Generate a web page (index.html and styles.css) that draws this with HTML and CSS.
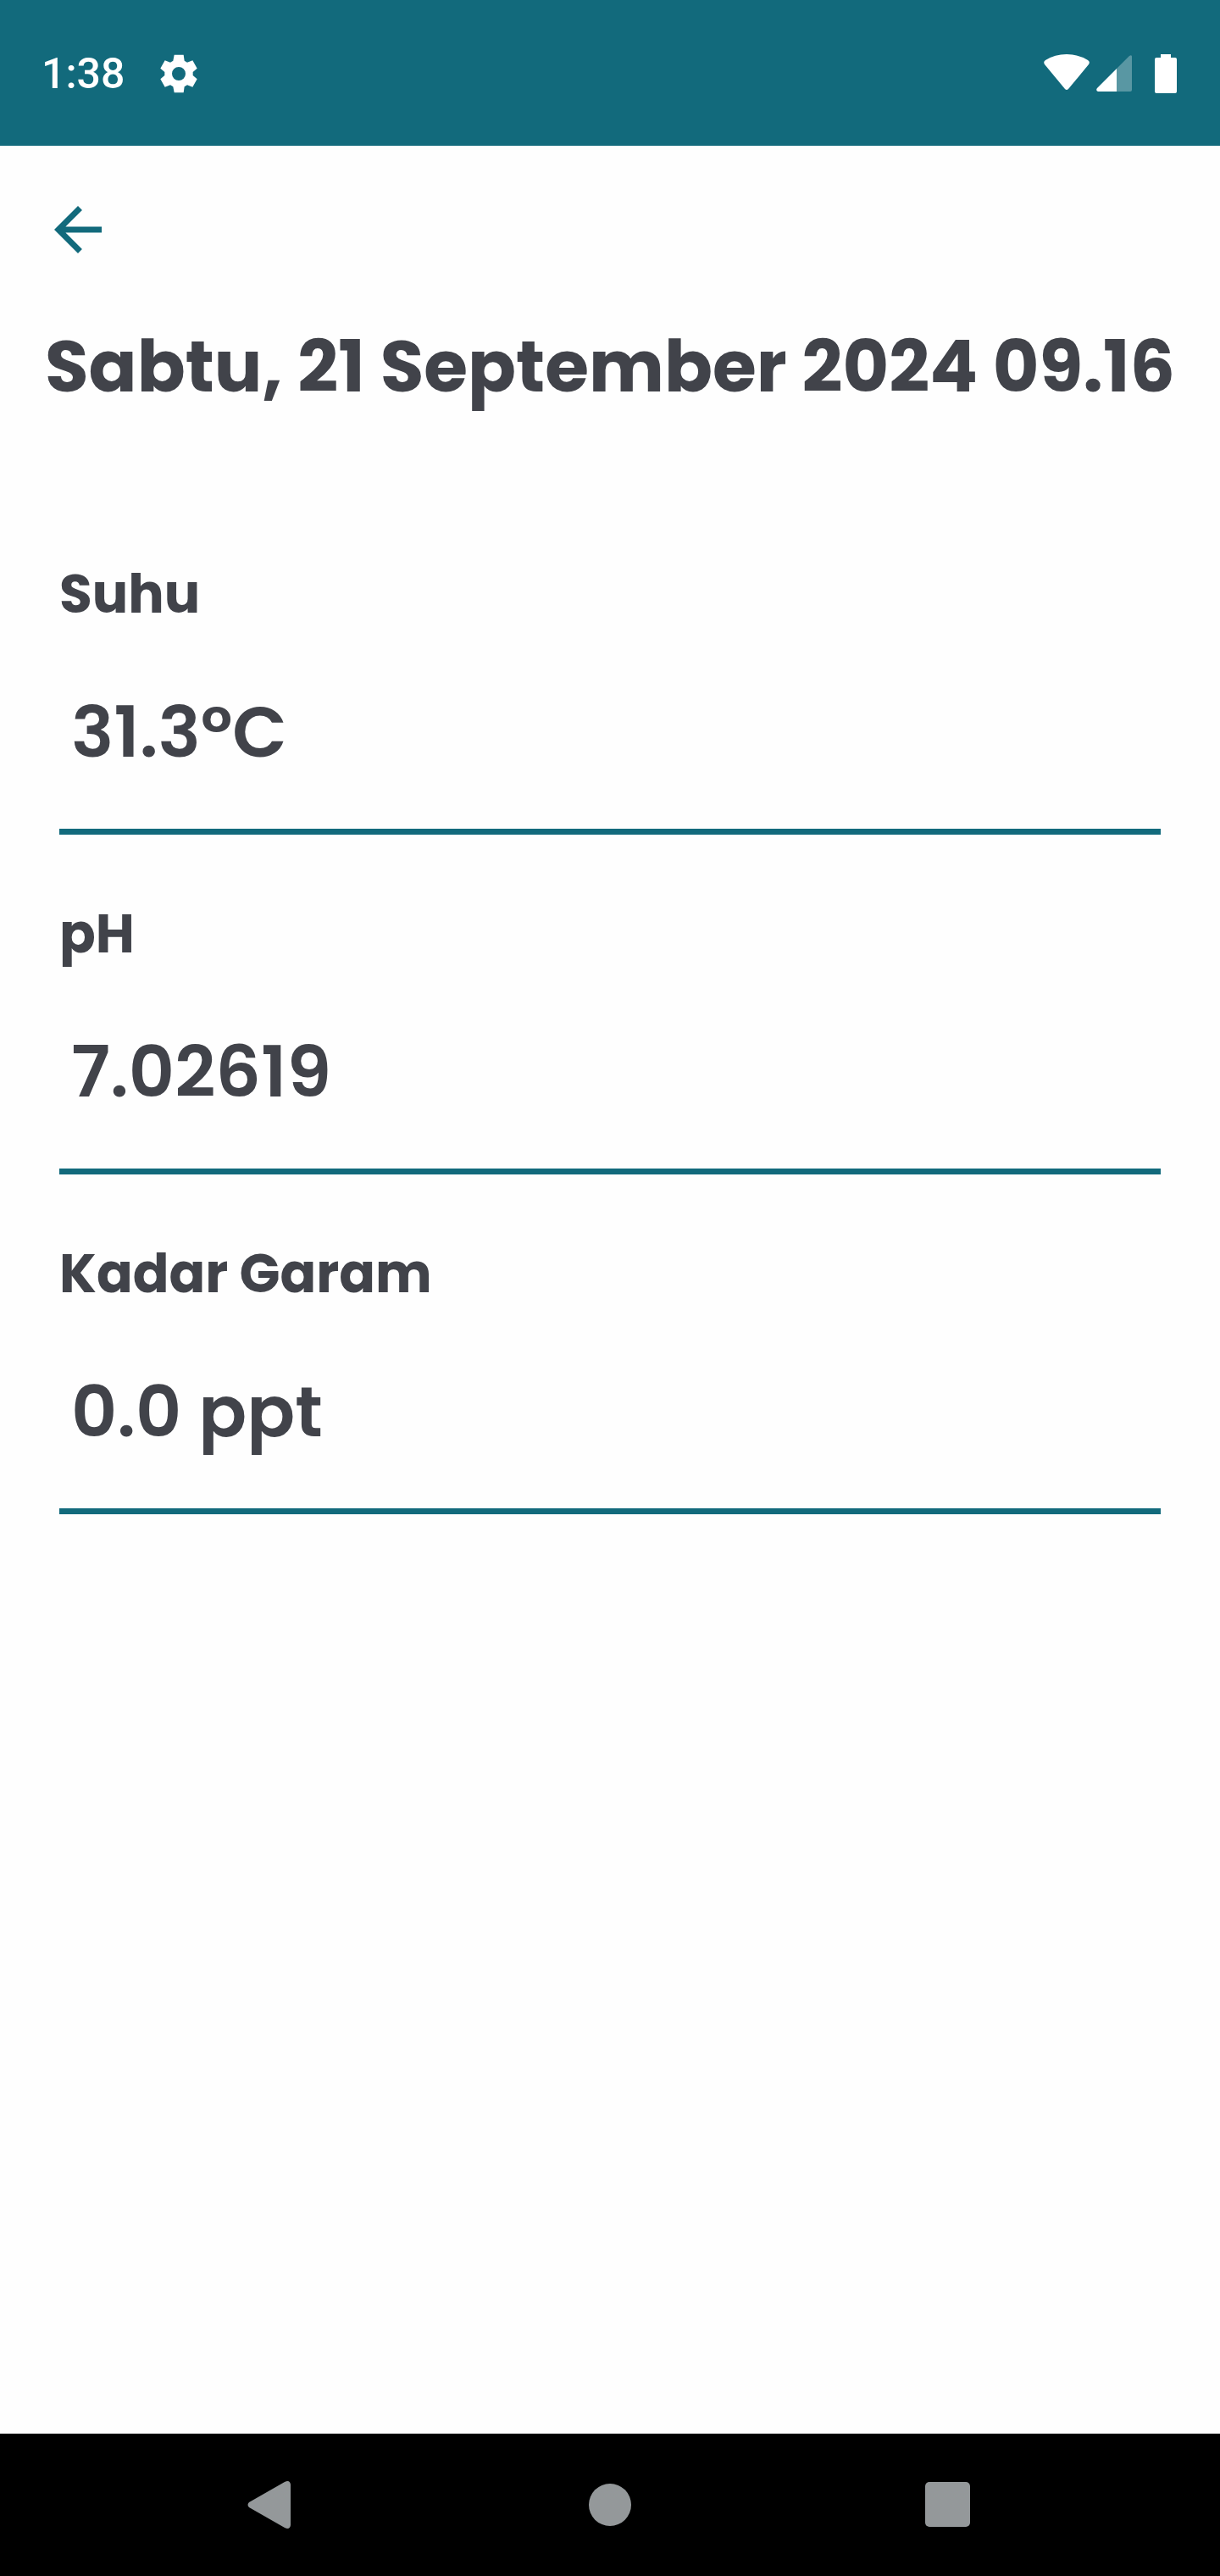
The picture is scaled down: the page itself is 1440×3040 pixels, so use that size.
FILE: index.html
```html
<!DOCTYPE html>
<html lang="id">
<head>
    <meta charset="UTF-8">
    <meta name="viewport" content="width=device-width, initial-scale=1.0">
    <title>Detail Riwayat</title>
    <link rel="stylesheet" href="styles.css">
</head>
<body>
    <header class="status-bar">
        <div class="status-left">
            <span class="clock">1:38</span>
            <svg class="gear-icon" viewBox="-72 -72 144 144" aria-hidden="true">
                <path fill-rule="evenodd" d="M-16-67H17L20-46 30-40 49-47 65-19 50-6V6L65 19 49 47 30 40 20 46 17 67H-16L-20 46-30 40-49 47-65 19-50 6V-6L-65-19-49-47-30-40-20-46ZM24 0A24 24 0 1 0-24 0 24 24 0 1 0 24 0Z"/>
            </svg>
        </div>
        <div class="status-right">
            <svg class="wifi-icon" viewBox="0 0 54 46" aria-hidden="true">
                <path d="M1 12Q-1 9 2 7Q13 0 27 0T52 7Q55 9 53 12L29 41Q27 43 25 41Z"/>
            </svg>
            <svg class="signal-icon" viewBox="0 0 42 46" aria-hidden="true">
                <path opacity=".3" d="M24 17 39 2Q42 0 42 3V42Q42 44 40 44H24Z"/>
                <path d="M24 17V44H2Q-1 43 1 40Z"/>
            </svg>
            <svg class="battery-icon" viewBox="0 0 26 46" aria-hidden="true">
                <path d="M7 0H19V4H24Q26 4 26 6V44Q26 46 24 46H2Q0 46 0 44V6Q0 4 2 4H7Z"/>
            </svg>
        </div>
    </header>

    <main class="content">
        <button class="back-btn" type="button" aria-label="Kembali">
            <svg viewBox="0 0 24 24" aria-hidden="true">
                <path d="M20 11H7.83l5.59-5.59L12 4l-8 8 8 8 1.41-1.41L7.83 13H20v-2z"/>
            </svg>
        </button>

        <h1>Sabtu, 21 September 2024 09.16</h1>

        <form class="readings">
            <div class="field">
                <label for="suhu">Suhu</label>
                <input id="suhu" type="text" value="31.3°C" readonly>
            </div>
            <div class="field">
                <label for="ph">pH</label>
                <input id="ph" type="text" value="7.02619" readonly>
            </div>
            <div class="field">
                <label for="garam">Kadar Garam</label>
                <input id="garam" type="text" value="0.0 ppt" readonly>
            </div>
        </form>
    </main>

    <nav class="nav-bar">
        <button class="nav-btn" type="button" aria-label="Back">
            <svg viewBox="0 0 98 98" aria-hidden="true">
                <path d="M20 46 62 22Q68 19 69 25V73Q68 79 62 76L20 52Q17 49 20 46Z"/>
            </svg>
        </button>
        <button class="nav-btn" type="button" aria-label="Home">
            <svg viewBox="0 0 98 98" aria-hidden="true">
                <circle cx="49" cy="49" r="25"/>
            </svg>
        </button>
        <button class="nav-btn" type="button" aria-label="Recent apps">
            <svg viewBox="0 0 98 98" aria-hidden="true">
                <rect x="24" y="22" width="53" height="53" rx="5"/>
            </svg>
        </button>
    </nav>
</body>
</html>
```

FILE: styles.css
```css
* {
    box-sizing: border-box;
}

body {
    margin: 0;
    min-height: 100vh;
    display: flex;
    flex-direction: column;
    background: #fefefe;
    color: #41434a;
    font-family: 'Poppins', 'Inter', sans-serif;
}

svg {
    display: block;
    fill: currentColor;
}

button {
    padding: 0;
    border: none;
    background: none;
    cursor: pointer;
}

/* Status bar */
.status-bar {
    display: flex;
    justify-content: space-between;
    align-items: center;
    height: 172px;
    padding: 2px 51px 0 49px;
    background: #126a7c;
    color: white;
}

.status-left,
.status-right {
    display: flex;
    align-items: center;
}

.status-left {
    gap: 40px;
}

.clock {
    font-family: 'Roboto', sans-serif;
    font-size: 50px;
    font-weight: 500;
}

.gear-icon {
    width: 48px;
    height: 48px;
}

.wifi-icon {
    width: 54px;
    height: 46px;
}

.signal-icon {
    width: 42px;
    height: 46px;
    margin: 0 27px 0 8px;
}

.battery-icon {
    width: 26px;
    height: 46px;
}

/* Content */
.content {
    flex: 1;
    padding: 57px 50px;
}

.back-btn {
    display: block;
    width: 84px;
    height: 84px;
    color: #126a7c;
}

h1 {
    margin: 57px 0 0;
    font-size: 84px;
    font-weight: 700;
    line-height: 126px;
    text-align: center;
    white-space: nowrap;
}

.readings {
    display: flex;
    flex-direction: column;
    gap: 70px;
    margin: 158px 20px 0;
}

.field {
    display: flex;
    flex-direction: column;
}

.field label {
    font-size: 63px;
    font-weight: 700;
    line-height: 94px;
}

.field input {
    width: 100%;
    height: 237px;
    padding: 0 14px;
    border: none;
    border-bottom: 7px solid #126a7c;
    outline: none;
    background: transparent;
    color: inherit;
    font-family: inherit;
    font-size: 84px;
    font-weight: 600;
}

/* System navigation */
.nav-bar {
    display: flex;
    justify-content: space-between;
    align-items: center;
    height: 168px;
    padding: 0 19%;
    background: black;
    color: #94989a;
}

.nav-btn {
    width: 98px;
    height: 98px;
    color: inherit;
}
```
